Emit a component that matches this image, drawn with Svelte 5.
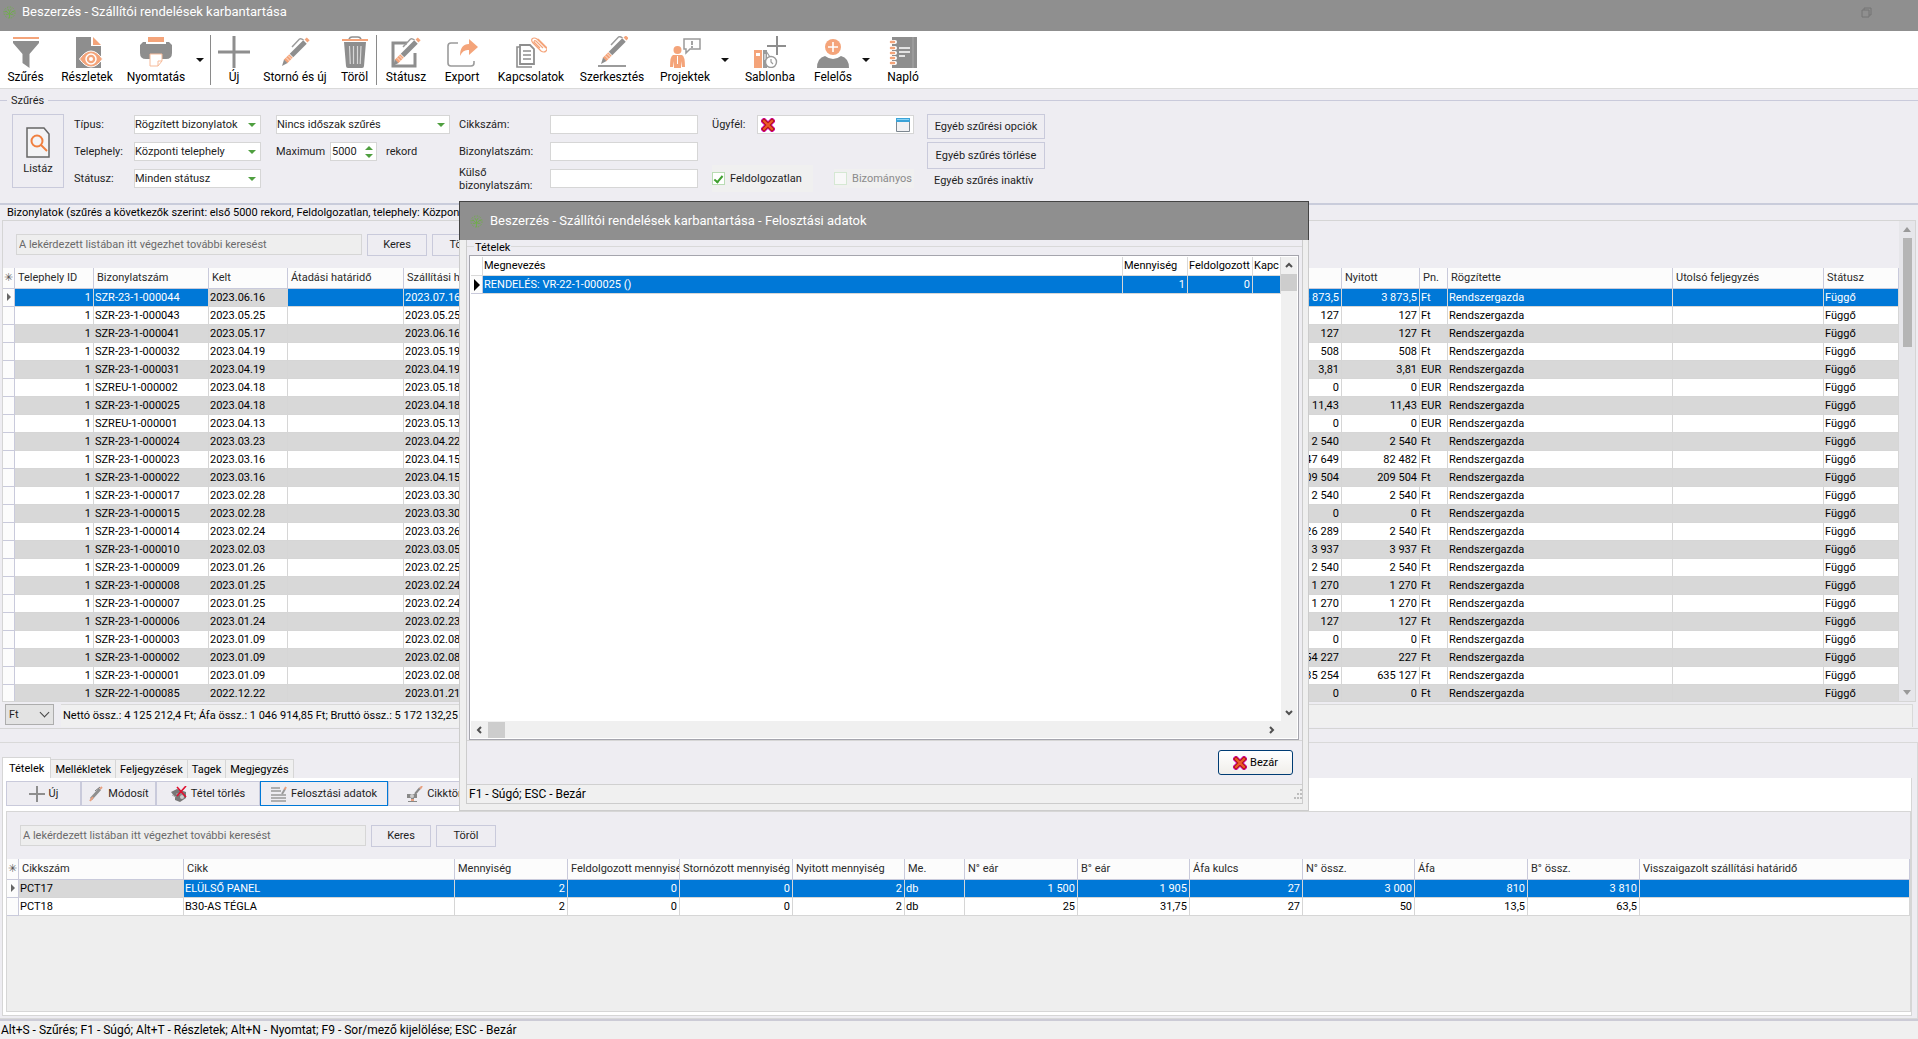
<script>
  const orders = [
    ['SZR-23-1-000044', '2023.06.16', '2023.07.16', '3 873,5', '3 873,5', 'Ft'],
    ['SZR-23-1-000043', '2023.05.25', '2023.05.25', '127', '127', 'Ft'],
    ['SZR-23-1-000041', '2023.05.17', '2023.06.16', '127', '127', 'Ft'],
    ['SZR-23-1-000032', '2023.04.19', '2023.05.19', '508', '508', 'Ft'],
    ['SZR-23-1-000031', '2023.04.19', '2023.04.19', '3,81', '3,81', 'EUR'],
    ['SZREU-1-000002', '2023.04.18', '2023.05.18', '0', '0', 'EUR'],
    ['SZR-23-1-000025', '2023.04.18', '2023.04.18', '11,43', '11,43', 'EUR'],
    ['SZREU-1-000001', '2023.04.13', '2023.05.13', '0', '0', 'EUR'],
    ['SZR-23-1-000024', '2023.03.23', '2023.04.22', '2 540', '2 540', 'Ft'],
    ['SZR-23-1-000023', '2023.03.16', '2023.04.15', '147 649', '82 482', 'Ft'],
    ['SZR-23-1-000022', '2023.03.16', '2023.04.15', '209 504', '209 504', 'Ft'],
    ['SZR-23-1-000017', '2023.02.28', '2023.03.30', '2 540', '2 540', 'Ft'],
    ['SZR-23-1-000015', '2023.02.28', '2023.03.30', '0', '0', 'Ft'],
    ['SZR-23-1-000014', '2023.02.24', '2023.03.26', '26 289', '2 540', 'Ft'],
    ['SZR-23-1-000010', '2023.02.03', '2023.03.05', '3 937', '3 937', 'Ft'],
    ['SZR-23-1-000009', '2023.01.26', '2023.02.25', '2 540', '2 540', 'Ft'],
    ['SZR-23-1-000008', '2023.01.25', '2023.02.24', '1 270', '1 270', 'Ft'],
    ['SZR-23-1-000007', '2023.01.25', '2023.02.24', '1 270', '1 270', 'Ft'],
    ['SZR-23-1-000006', '2023.01.24', '2023.02.23', '127', '127', 'Ft'],
    ['SZR-23-1-000003', '2023.01.09', '2023.02.08', '0', '0', 'Ft'],
    ['SZR-23-1-000002', '2023.01.09', '2023.02.08', '54 227', '227', 'Ft'],
    ['SZR-23-1-000001', '2023.01.09', '2023.02.08', '635 254', '635 127', 'Ft'],
    ['SZR-22-1-000085', '2022.12.22', '2023.01.21', '0', '0', 'Ft']
  ];
  const items = [
    ['PCT17', 'ELÜLSŐ PANEL', '2', '0', '0', '2', 'db', '1 500', '1 905', '27', '3 000', '810', '3 810', ''],
    ['PCT18', 'B30-AS TÉGLA', '2', '0', '0', '2', 'db', '25', '31,75', '27', '50', '13,5', '63,5', '']
  ];
  const itemHeads = ['Cikkszám', 'Cikk', 'Mennyiség', 'Feldolgozott mennyiség', 'Stornózott mennyiség', 'Nyitott mennyiség', 'Me.', 'N° eár', 'B° eár', 'Áfa kulcs', 'N° össz.', 'Áfa', 'B° össz.', 'Visszaigazolt szállítási határidő'];
  const textCols = [0, 1, 6, 13];
  const tools = [
    ['filter', 'Szűrés'], ['details', 'Részletek'], ['print', 'Nyomtatás'], ['arrow', 'Nyomtatás menü'], ['sep', ''],
    ['plus', 'Új'], ['pen', 'Stornó és új'], ['trash', 'Töröl'], ['sep', ''],
    ['status', 'Státusz'], ['export', 'Export'], ['links', 'Kapcsolatok'], ['edit', 'Szerkesztés'],
    ['projects', 'Projektek'], ['arrow', 'Projektek menü'], ['template', 'Sablonba'], ['person', 'Felelős'], ['arrow', 'Felelős menü'], ['log', 'Napló']
  ];
  const tabs = ['Tételek', 'Mellékletek', 'Feljegyzések', 'Tagek', 'Megjegyzés'];
</script>

{#snippet logo()}
  <svg class="logo" viewBox="0 0 14 14" aria-hidden="true">
    <g fill="none" stroke="#6fae4a" stroke-width="1">
      <path d="M7 13V6M7 9 3 5M7 9l4-4M4 6H2M10 6h2M3 9h3M8 9h3M7 6 5 3M7 6l2-3" />
      <circle cx="7" cy="7" r="6" stroke-dasharray="1.6 1.5" />
    </g>
  </svg>
{/snippet}

{#snippet cross()}
  <svg class="cross" viewBox="0 0 14 14" aria-hidden="true">
    <path d="M3 3l8 8M11 3l-8 8" stroke="#d400b8" stroke-width="5.6" stroke-linecap="square" />
    <path d="M3 3l8 8M11 3l-8 8" stroke="#b3200c" stroke-width="4" stroke-linecap="square" />
    <path d="M3 3l8 8M11 3l-8 8" stroke="#ee5a2c" stroke-width="2" stroke-linecap="round" />
  </svg>
{/snippet}

{#snippet penShape()}
  <path d="M13 19 26 6" stroke="#fff" stroke-width="7" />
  <path d="M12.500 19.500 26 6" stroke="#8e8e8e" stroke-width="5" />
  <path d="M13 11l7.500-8q1.500-1 4 1" fill="none" stroke="#9b9b9b" stroke-width="1.500" />
  <path d="M27 5l2.200-2.200" stroke="#f4a47a" stroke-width="4" />
  <path d="M12 20 6.500 25.500" stroke="#f4a47a" stroke-width="5" />
  <path d="M9 19.500l4 4M7 21.500l4 4" stroke="#fff" stroke-width=".7" />
  <path d="M5 23.500 8.500 27 3 30z" fill="#8e8e8e" />
{/snippet}

{#snippet icon(name)}
  <svg class="ico" viewBox="0 0 32 32" aria-hidden="true">
    {#if name === 'filter'}
      <path d="M3 1h26v2H3z" fill="#f4a47a" />
      <path d="M3 5h26v2L19.500 18v14L12.500 27V18L3 7z" fill="#8e8e8e" />
    {:else if name === 'details'}
      <path d="M5 1h15v9h10v22H5z" fill="#8e8e8e" />
      <path d="M22 1l8 8h-8z" fill="#f4a47a" />
      <path d="M8.500 23Q20 7 31.500 23 20 39 8.500 23z" fill="#f4a47a" stroke="#fff" />
      <circle cx="20" cy="23" r="5" fill="none" stroke="#fff" stroke-width="1.500" />
      <circle cx="20" cy="23" r="2" fill="#fff" />
    {:else if name === 'print'}
      <path d="M8 1h16v5H8z" fill="#f4a47a" />
      <path d="M3 6h3v2h20V6h3l3 3v8q0 6-6 6H6q-6 0-6-6V9z" fill="#8e8e8e" />
      <path d="M10 18h12v7l-4 5h-8z" fill="#fff" stroke="#f6bb9a" />
      <path d="M22 25h-4v5" fill="none" stroke="#f6bb9a" />
    {:else if name === 'plus'}
      <path d="M16 0v32M0 16h32" stroke="#8e8e8e" stroke-width="3" />
    {:else if name === 'pen'}
      {@render penShape()}
    {:else if name === 'trash'}
      <path d="M10 3Q11 1 13 1h6q2 0 3 2" fill="none" stroke="#8e8e8e" stroke-width="1.600" />
      <path d="M3 4h26" stroke="#f4a47a" stroke-width="2" />
      <path d="M5 6h22l-2 24q0 2-2 2H9q-2 0-2-2z" fill="#8e8e8e" />
      <path d="M10.500 10l.8 18M14.500 10v18M18.500 10v18M22 10l-.8 18" stroke="#fff" stroke-width="1.200" opacity=".65" />
    {:else if name === 'status'}
      <path d="M17 7H3v23h22V17" fill="none" stroke="#8e8e8e" stroke-width="3" />
      <g>{@render penShape()}</g>
    {:else if name === 'export'}
      <path d="M12 7H5Q2 7 2 10v17q0 3 3 3h20q3 0 3-3v-2" fill="none" stroke="#9b9b9b" stroke-width="1.600" />
      <path d="M14 20q0-12 9-12V3l9 8-9 8v-5q-6-1-9 6z" fill="#f4a47a" />
    {:else if name === 'links'}
      <path d="M5 11H2v20h15" fill="none" stroke="#8e8e8e" stroke-width="1.600" />
      <path d="M5 9h10l4 4v15H5z" fill="#fff" stroke="#8e8e8e" stroke-width="1.800" />
      <path d="M8 15h8M8 19h8M8 23h8" stroke="#8e8e8e" stroke-width="1.500" />
      <path d="M31 12 22 3q-3-2-5 0-1 2 1 4l8 8q3 2 5 0t0-4l-8-8M28 12l-7-7q-2-1-2 1l6 6" fill="none" stroke="#f4a47a" stroke-width="1.200" />
    {:else if name === 'edit'}
      <path d="M2 30h28" stroke="#9b9b9b" stroke-width="2" />
      <g transform="translate(2 -2)">{@render penShape()}</g>
    {:else if name === 'projects'}
      <circle cx="8.500" cy="14" r="4" fill="#f4a47a" />
      <path d="M4 19h9q3 1 3 12h-3l-1-6v7H5v-7l-1 6H1q0-11 3-12z" fill="#f4a47a" />
      <path d="M8.500 20v8" stroke="#fff" />
      <path d="M15 3h16v10H21l-4 4v-4h-2z" fill="#fff" stroke="#9b9b9b" stroke-width="1.500" />
      <path d="M23 5v4M23 10v2" stroke="#8e8e8e" stroke-width="1.600" />
    {:else if name === 'template'}
      <path d="M0 14h8v18H0z" fill="#f4a47a" /><path d="M2 17h4v3H2z" fill="#fff" />
      <path d="M9 14h4v18H9z" fill="#9b9b9b" /><path d="M11 18v6" stroke="#fff" />
      <circle cx="17" cy="26" r="5.500" fill="#fff" stroke="#9b9b9b" stroke-width="1.400" />
      <path d="M17 23v3l2 2M12 15l4 6" fill="none" stroke="#9b9b9b" stroke-width="1.200" />
      <path d="M23 0v19M13 10h19" stroke="#8e8e8e" stroke-width="2" />
    {:else if name === 'person'}
      <circle cx="16" cy="11" r="8" fill="#f4a47a" />
      <path d="M16 6v10M11 11h10" stroke="#fff" stroke-width="1.600" />
      <path d="M0 32q0-10 8-12 8 6 16 0 8 2 8 12z" fill="#8e8e8e" />
    {:else if name === 'log'}
      <path d="M5 1h25v31H5z" fill="#8e8e8e" />
      <path d="M12 12h11M12 16h11M12 20h6" stroke="#fff" stroke-width="1.400" />
      <path d="M26 1v31" stroke="#a8a8a8" />
      <path d="M3 6h5M3 12h5M3 17h5M3 22h5M3 27h5" stroke="#fff" stroke-width="4" stroke-linecap="round" />
      <path d="M4 6h3M4 12h3M4 17h3M4 22h3M4 27h3" stroke="#f4a47a" stroke-width="2.500" stroke-linecap="round" />
    {/if}
  </svg>
{/snippet}

{#snippet search(label)}
  <div class="search">
    <input type="text" aria-label={label} placeholder="A lekérdezett listában itt végezhet további keresést" />
    <button class="btn">Keres</button>
    <button class="btn">Töröl</button>
  </div>
{/snippet}

<div class="page">
  <header class="titlebar">
    {@render logo()}
    <h1>Beszerzés - Szállítói rendelések karbantartása</h1>
    <button class="restore" aria-label="Ablak visszaállítása">
      <svg viewBox="0 0 11 11" aria-hidden="true"><path d="M1 3h7v7H1zM3 3V1h7v7H8" fill="none" stroke="#747474" /></svg>
    </button>
  </header>

  <nav class="toolbar">
    {#each tools as [kind, text]}
      {#if kind === 'sep'}
        <span class="sep"></span>
      {:else if kind === 'arrow'}
        <button class="drop" aria-label={text}></button>
      {:else}
        <button class="tool">{@render icon(kind)}<span>{text}</span></button>
      {/if}
    {/each}
  </nav>

  <fieldset class="filters">
    <legend>Szűrés</legend>
    <button class="btn list">
      <svg viewBox="0 0 24 31" aria-hidden="true">
        <path d="M1 1h17l5 6v23H1z" fill="#f4f4f6" stroke="#666" stroke-width="1.500" />
        <circle cx="11" cy="14" r="5.500" fill="none" stroke="#f08040" stroke-width="2" />
        <path d="M15 18l6 6" stroke="#f08040" stroke-width="2" />
      </svg>
      <span>Listáz</span>
    </button>
    <div class="fields">
      <label for="f-type">Típus:</label>
      <span class="pick"><select id="f-type"><option>Rögzített bizonylatok</option></select></span>
      <span class="pick c4"><select aria-label="Időszak"><option>Nincs időszak szűrés</option></select></span>
      <label class="c6" for="f-item">Cikkszám:</label>
      <input class="box" id="f-item" type="text" />
      <label class="c9" for="f-client">Ügyfél:</label>
      <span class="client">
        <button aria-label="Ügyfél törlése">{@render cross()}</button>
        <input id="f-client" type="text" />
        <button aria-label="Ügyfél választása">
          <svg class="win" viewBox="0 0 14 14" aria-hidden="true"><path d="M.5.500h13v13H.5z" fill="#f2f2f4" stroke="#7d8790" /><path d="M0 0h14v4H0z" fill="#3ba3d8" /><path d="M1 1.500h12" stroke="#8ad4f5" /></svg>
        </button>
      </span>

      <label for="f-site">Telephely:</label>
      <span class="pick"><select id="f-site"><option>Központi telephely</option></select></span>
      <span class="max c4">
        <label for="f-max">Maximum</label>
        <span class="spin"><input id="f-max" type="text" value="5000" /><i class="up"></i><i class="down"></i></span>
        <span>rekord</span>
      </span>
      <label class="c6" for="f-doc">Bizonylatszám:</label>
      <input class="box" id="f-doc" type="text" />

      <label class="c1" for="f-status">Státusz:</label>
      <span class="pick"><select id="f-status"><option>Minden státusz</option></select></span>
      <label class="c6 two" for="f-ext">Külső bizonylatszám:</label>
      <input class="box" id="f-ext" type="text" />
      <span class="checks c9">
        <label><input type="checkbox" checked />Feldolgozatlan</label>
        <label class="off"><input type="checkbox" disabled />Bizományos</label>
      </span>
    </div>
    <div class="extra">
      <button class="btn">Egyéb szűrési opciók</button>
      <button class="btn">Egyéb szűrés törlése</button>
      <span>Egyéb szűrés inaktív</span>
    </div>
  </fieldset>

  <section class="orders">
    <h2>Bizonylatok (szűrés a következők szerint: első 5000 rekord, Feldolgozatlan, telephely: Központi telephely)</h2>
    <div class="orders-body">
      <div class="main">
        {@render search('Keresés a bizonylatokban')}
        <div class="clip">
          <table class="grid">
            <colgroup>
              <col class="w12" /><col class="w79" /><col class="w115" /><col class="w79" /><col class="w116" /><col class="w116" /><col /><col class="w116" /><col class="w78" /><col class="w28" /><col class="w225" /><col class="w151" /><col class="w75" />
            </colgroup>
            <thead>
              <tr>
                <th class="mark">✳</th><th>Telephely ID</th><th>Bizonylatszám</th><th>Kelt</th><th>Átadási határidő</th><th>Szállítási határidő</th><th></th><th></th><th>Nyitott</th><th>Pn.</th><th>Rögzítette</th><th>Utolsó feljegyzés</th><th>Státusz</th>
              </tr>
            </thead>
            <tbody>
              {#each orders as [doc, date, due, total, open, cur], i}
                <tr class:sel={i === 0} class:alt={i % 2 === 0}>
                  <td class="mark">{#if i === 0}<i class="cur"></i>{/if}</td>
                  <td class="num">1</td><td>{doc}</td><td class:plain={i === 0}>{date}</td><td></td><td>{due}</td><td></td>
                  <td class="num">{total}</td><td class="num">{open}</td><td>{cur}</td><td>Rendszergazda</td><td></td><td>Függő</td>
                </tr>
              {/each}
            </tbody>
          </table>
        </div>
      </div>
      <div class="vbar"><i class="up"></i><b></b><i class="down"></i></div>
    </div>
    <footer class="sums">
      <span class="money"><select aria-label="Pénznem"><option>Ft</option></select></span>
      <output>Nettó össz.: 4 125 212,4 Ft; Áfa össz.: 1 046 914,85 Ft; Bruttó össz.: 5 172 132,25 Ft</output>
    </footer>
  </section>

  <section class="details">
    <div class="tabs" role="tablist">
      {#each tabs as tab, i}
        <button role="tab" aria-selected={i === 0} class:on={i === 0}>{tab}</button>
      {/each}
    </div>
    <div class="sheet">
      <div class="acts">
        <button class="btn"><svg viewBox="0 0 16 16" aria-hidden="true"><path d="M8 0v16M0 8h16" stroke="#8e8e8e" stroke-width="2" /></svg>Új</button>
        <button class="btn"><svg viewBox="0 0 16 16" aria-hidden="true"><path d="M3 13 12 3" stroke="#8e8e8e" stroke-width="3" /><path d="M7 5l5-4" stroke="#777" /><path d="M2 15l3-4" stroke="#e7a080" stroke-width="2" /><path d="M12 3l2-2" stroke="#e7a080" stroke-width="2" /></svg>Módosít</button>
        <button class="btn"><svg viewBox="0 0 16 16" aria-hidden="true"><path d="M0 6 6 3l9 3v6l-6 4-5-2v-3z" fill="#777" /><path d="M1 9l4 2M5 8h8" stroke="#aaa" /><circle cx="11" cy="11" r="2" fill="#ccc" /><path d="M6 1l9 10M15 0 6 10" stroke="#e01030" stroke-width="1.600" /></svg>Tétel törlés</button>
        <button class="btn focus"><svg viewBox="0 0 16 16" aria-hidden="true"><path d="M0 2h9M0 5h10M0 9h15M0 12h15M0 15h15" stroke="#999" stroke-width="1.500" /><path d="M11 8l3-5" stroke="#999" stroke-width="2" /><path d="M13.500 3.500 15 1" stroke="#e7a080" stroke-width="2" /></svg>Felosztási adatok</button>
        <button class="btn"><svg viewBox="0 0 16 16" aria-hidden="true"><path d="M0 8h10v4H7v3h3v1H1v-1h3v-3H0z" fill="#888" /><circle cx="5" cy="10" r="2" fill="#ccc" /><path d="M8 8l5-6" stroke="#888" stroke-width="2" /><path d="M13 3l2-3" stroke="#e7a080" stroke-width="2" /><path d="M4 14h3" stroke="#e7a080" stroke-width="2" /></svg>Cikktörzs</button>
      </div>
      <div class="inner">
        {@render search('Keresés a tételekben')}
        <div class="blank">
          <table class="grid">
            <colgroup>
              <col class="w12" /><col class="w165" /><col class="w271" /><col class="w113" /><col class="w112" /><col class="w113" /><col class="w112" /><col class="w60" /><col class="w113" /><col class="w112" /><col class="w113" /><col class="w112" /><col class="w113" /><col class="w112" /><col />
            </colgroup>
            <thead>
              <tr><th class="mark">✳</th>{#each itemHeads as head}<th>{head}</th>{/each}</tr>
            </thead>
            <tbody>
              {#each items as row, i}
                <tr class:sel={i === 0}>
                  <td class="mark">{#if i === 0}<i class="cur"></i>{/if}</td>
                  {#each row as cell, c}
                    <td class:num={!textCols.includes(c)} class:plain={i === 0 && c === 0}>{cell}</td>
                  {/each}
                </tr>
              {/each}
            </tbody>
          </table>
        </div>
      </div>
    </div>
  </section>

  <footer class="status">Alt+S - Szűrés; F1 - Súgó; Alt+T - Részletek; Alt+N - Nyomtat; F9 - Sor/mező kijelölése; ESC - Bezár</footer>

  <div class="modal" role="dialog" aria-labelledby="modal-title">
    <header>{@render logo()}<h2 id="modal-title">Beszerzés - Szállítói rendelések karbantartása - Felosztási adatok</h2></header>
    <div class="frame">
      <fieldset>
        <legend>Tételek</legend>
        <div class="list-box">
          <div class="list-main">
            <table class="grid thin">
              <colgroup><col class="w12" /><col /><col class="w65" /><col class="w65" /><col class="w28" /></colgroup>
              <thead><tr><th></th><th>Megnevezés</th><th>Mennyiség</th><th>Feldolgozott</th><th>Kapc</th></tr></thead>
              <tbody>
                <tr class="sel"><td class="mark"><i class="cur"></i></td><td>RENDELÉS: VR-22-1-000025 ()</td><td class="num">1</td><td class="num">0</td><td></td></tr>
              </tbody>
            </table>
          </div>
          <div class="sv">
            <svg viewBox="0 0 16 16" aria-hidden="true"><path d="M5 10l3-3 3 3" /></svg><b></b>
            <svg viewBox="0 0 16 16" aria-hidden="true"><path d="M5 6l3 3 3-3" /></svg>
          </div>
          <div class="sh">
            <svg viewBox="0 0 16 16" aria-hidden="true"><path d="M10 5 7 8l3 3" /></svg><b></b>
            <svg viewBox="0 0 16 16" aria-hidden="true"><path d="M6 5l3 3-3 3" /></svg>
          </div>
        </div>
      </fieldset>
      <div class="close"><button>{@render cross()}Bezár</button></div>
      <footer>
        <span>F1 - Súgó; ESC - Bezár</span>
        <svg viewBox="0 0 8 12" aria-hidden="true"><path d="M6 1h2v2H6zM6 5h2v2H6zM3 5h2v2H3zM6 9h2v2H6zM3 9h2v2H3zM0 9h2v2H0z" fill="#bdbdbd" /></svg>
      </footer>
    </div>
  </div>
</div>

<style>
  :global(body) { margin: 0; background: #eeedf2; }
  .page {
    --ui: Roboto, "Noto Sans", sans-serif;
    position: relative; display: flex; flex-direction: column; min-height: 100vh;
    font: 11px/14px var(--ui); color: #1e1e1e; background: #eeedf2; overflow: hidden;
  }
  .page * { box-sizing: border-box; }
  button, input, select { font: inherit; color: inherit; margin: 0; padding: 0; border: 0; background: none; border-radius: 0; }
  h1, h2 { margin: 0; font-weight: 400; }
  fieldset { margin: 0; padding: 0; border: 0; min-width: 0; }

  .titlebar { display: flex; align-items: center; height: 31px; padding: 0 46px 7px 3px; background: #8f8f8f; color: #fff; }
  .logo { width: 13px; height: 13px; flex: none; }
  .titlebar h1 { flex: 1; margin-left: 6px; font: 13px/18px var(--ui); }
  .restore svg { display: block; width: 11px; height: 11px; }

  .toolbar {
    display: grid; height: 58px; background: #fff; border-bottom: 1px solid #dadada; align-items: start;
    grid-template-columns: 51px 72px 66px 21px 1px 46px 76px 43px 2px 56px 56px 82px 80px 66px 14px 76px 50px 16px 58px;
  }
  .tool { display: flex; flex-direction: column; align-items: center; padding-top: 5px; font: 12px/19px var(--ui); color: #000; white-space: nowrap; }
  .ico { width: 32px; height: 32px; }
  .sep { width: 1px; height: 50px; margin-top: 4px; background: #8a8a8a; }
  .drop { height: 58px; display: grid; place-items: center; }
  .drop::before { content: ""; border: 4px solid transparent; border-top-color: #111; border-bottom: 0; }

  .btn { border: 1px solid #c9cadb; background: #eeedf2; text-align: center; white-space: nowrap; }
  .filters { position: relative; display: flex; height: 116px; padding: 22px 12px 0; border-bottom: 2px solid #c9ccdb; align-items: start; }
  .filters::before { content: ""; position: absolute; left: 0; right: 0; top: 11px; height: 1px; background: #c9cadb; }
  .filters legend { position: absolute; left: 7px; top: 5px; padding: 0 4px; background: #eeedf2; }
  .list { display: flex; flex-direction: column; align-items: center; width: 52px; height: 74px; margin-top: 3px; padding-top: 12px; gap: 4px; }
  .list svg { width: 24px; height: 31px; }
  .fields {
    display: grid; margin-left: 10px; grid-template-rows: 27px 27px 27px; align-items: center;
    grid-template-columns: 60px 127px 15px 174px 9px 91px 148px 14px 45px 157px;
  }
  .c1 { grid-column: 1; }
  .c4 { grid-column: 4; }
  .c6 { grid-column: 6; }
  .c9 { grid-column: 9; }
  .checks.c9 { grid-column: 9 / 11; }
  .two { line-height: 13px; }
  .pick { position: relative; display: block; height: 19px; background: #fff; border: 1px solid #d6d6d6; }
  .pick select { display: block; width: 100%; height: 100%; appearance: none; }
  .pick::after { content: ""; position: absolute; right: 4px; top: 7px; border: 4px solid transparent; border-top-color: #4f9f3f; border-bottom: 0; pointer-events: none; }
  .box { height: 19px; background: #fff; border: 1px solid #d6d6d6; }
  .client { display: flex; align-items: center; height: 19px; padding: 0 3px; background: #fff; border: 1px solid #d6d6d6; }
  .client input { flex: 1; min-width: 0; }
  .cross, .win { display: block; width: 14px; height: 14px; }
  .max { display: flex; align-items: center; }
  .max label { width: 54px; }
  .spin { display: grid; grid-template: 8px 8px / 1fr 14px; align-content: center; align-items: center; justify-items: center; width: 47px; height: 19px; margin-right: 9px; background: #fff; border: 1px solid #d6d6d6; }
  .spin input { grid-row: 1 / 3; width: 100%; padding-left: 1px; }
  .up, .down { border: 4px solid transparent; }
  .up { border-bottom-color: #4f9f3f; border-top: 0; }
  .down { border-top-color: #4f9f3f; border-bottom: 0; grid-column: 2; }
  .checks { display: flex; align-items: center; justify-content: space-between; }
  .checks label { display: flex; align-items: center; gap: 5px; height: 27px; padding: 0 11px 0 0; background: #f0f0f0; }
  .checks .off { height: 19px; padding: 0 2px 0 0; color: #8b8b8b; }
  .checks input { appearance: none; display: grid; place-items: center; width: 13px; height: 13px; background: #fff; border: 1px solid #b9dcb4; }
  .checks .off input { background: #f8f8f8; border-color: #d5e8d3; }
  .checks input:checked::before { content: ""; width: 3px; height: 7px; border: solid #3f9f2f; border-width: 0 2px 2px 0; rotate: 40deg; }
  .extra { display: flex; flex-direction: column; gap: 3px; width: 118px; margin: 3px 0 0 13px; }
  .extra .btn { height: 25px; }
  .extra .btn + .btn { height: 27px; }
  .extra span { padding: 2px 7px; }

  .orders { height: 524px; display: flex; flex-direction: column; border-bottom: 1px solid #d5d5d5; }
  .orders h2 { padding: 0 7px; font: 11px/15px var(--ui); height: 15px; color: #000; white-space: nowrap; }
  .orders-body { display: flex; height: 482px; margin: 0 2px; border: 1px solid #d5d5d5; }
  .main { flex: 1; min-width: 0; }
  .search { display: grid; grid-template-columns: 346px 60px 60px; column-gap: 5px; padding: 13px; height: 47px; }
  .search input { height: 21px; padding: 0 2px; background: #eee; border: 1px solid #d6d6d6; }
  .search input::placeholder { color: #6a6a6a; opacity: 1; }
  .search .btn { height: 22px; }
  .clip { height: 433px; overflow: hidden; }
  .grid { width: 100%; table-layout: fixed; border-collapse: separate; border-spacing: 0; background: #fff; color: #000; }
  .grid th { height: 21px; padding: 0 3px; font-weight: 400; text-align: left; color: #2a2a2a; background: #fcfcfc; border: solid #c9cadb; border-width: 0 1px 1px 0; overflow: hidden; white-space: nowrap; }
  .grid td { height: 18px; padding: 0 2px 0 1px; border: solid #d6d6d6; border-width: 0 1px 1px 0; overflow: hidden; white-space: nowrap; line-height: 17px; }
  .grid .num { text-align: right; }
  .grid .alt td { background: #d8d8d8; }
  .grid .sel td { background: #0078d7; color: #fff; }
  .grid .sel .plain { background: #d8d8d8; color: #000; }
  .grid .mark, .grid .sel .mark, .grid .alt .mark { padding: 0; text-align: center; background: #fcfcfc; color: #555; border-color: #c9cadb; }
  .cur { display: inline-block; border: 4px solid transparent; border-left-color: #666; border-right: 0; }
  .w12 { width: 12px; } .w28 { width: 28px; } .w60 { width: 60px; } .w65 { width: 65px; } .w75 { width: 75px; } .w78 { width: 78px; }
  .w79 { width: 79px; } .w112 { width: 112px; } .w113 { width: 113px; } .w115 { width: 115px; } .w116 { width: 116px; }
  .w151 { width: 151px; } .w165 { width: 165px; } .w225 { width: 225px; } .w271 { width: 271px; }
  .vbar { display: flex; flex-direction: column; align-items: center; width: 16px; padding: 6px 0; background: #e6e6ea; }
  .vbar .up { border-bottom-color: #999; border-bottom-width: 5px; }
  .vbar .down { border-top-color: #999; border-top-width: 5px; margin-top: auto; }
  .vbar b { width: 9px; height: 109px; margin-top: 6px; background: #b5b5b5; }
  .sums { display: flex; gap: 7px; padding: 2px 5px; flex: 1; }
  .money { position: relative; width: 49px; height: 21px; background: #e3e3e3; border: 1px solid #adadad; }
  .money select { width: 100%; height: 100%; padding-left: 3px; appearance: none; }
  .money::after { content: ""; position: absolute; right: 5px; top: 4px; width: 6px; height: 6px; border: solid #444; border-width: 0 1px 1px 0; rotate: 45deg; pointer-events: none; }
  output { flex: 1; padding: 2px; border-top: 1px solid #d9d9d9; border-right: 1px solid #d9d9d9; background: #f0f0f0; font: 11px/18px var(--ui); color: #000; white-space: nowrap; overflow: hidden; }

  .details { flex: 1; display: flex; flex-direction: column; margin-top: 13px; padding: 14px 5px 2px 2px; border: 1px solid #d9d9d9; border-left: 0; }
  .tabs { display: flex; align-items: flex-end; height: 21px; }
  .tabs button { height: 19px; padding: 0 4px; border: 1px solid #d6d6d6; border-width: 1px 1px 0 0; background: #f0f0f0; font: 11px/17px var(--ui); color: #000; }
  .tabs .on { height: 21px; padding: 0 6px; background: #fff; border-left-width: 1px; }
  .sheet { flex: 1; display: flex; flex-direction: column; padding: 3px 0 3px 3px; background: #fff; border: 1px solid #d6d6d6; border-top: 0; }
  .acts { display: grid; grid-template-columns: 75px 75px 104px 128px 104px; height: 25px; }
  .acts .btn { display: flex; align-items: center; justify-content: center; gap: 4px; }
  .acts svg { width: 16px; height: 16px; }
  .acts .focus { border-color: #0078d7; }
  .inner { flex: 1; display: flex; flex-direction: column; margin-top: 5px; border: 1px solid #d6d6d6; background: #eeedf2; }
  .blank { flex: 1; background: #eee; }
  .status { height: 20px; padding: 0 1px; border-top: 2px solid #cccbd6; background: #f0f0f0; font: 12px/18px var(--ui); color: #000; }

  .modal { position: absolute; left: 459px; top: 201px; width: 850px; height: 610px; display: flex; flex-direction: column; background: #efefef; border: 1px solid #ccc; color: #000; }
  .modal > header { display: flex; align-items: center; height: 40px; margin: -1px -1px 0; padding: 0 10px; gap: 7px; background: #8f8f8f; border: solid #444; border-width: 1px 1px 0; color: #fff; }
  .modal h2 { font: 13px/18px var(--ui); }
  .frame { flex: 1; display: flex; flex-direction: column; margin: 0 5px 6px 6px; background: #eeedf2; border: 1px solid #ccc; border-top: 0; }
  .frame fieldset { position: relative; height: 501px; padding: 15px 3px 0 2px; border-bottom: 1px solid #d6d6d6; }
  .frame fieldset::before { content: ""; position: absolute; left: 0; right: 0; top: 6px; height: 1px; background: #d9d9d9; }
  .frame legend { position: absolute; left: 7px; top: 1px; padding: 0 1px; background: #eeedf2; }
  .list-box { display: grid; grid-template: 1fr 17px / 1fr 16px; height: 485px; padding: 1px; background: #fff; border: 1px solid #a5a5ad; }
  .thin th { height: 19px; padding: 0 1px; background: #fff; color: #000; border-color: #d9d9d9; }
  .thin .cur { border-width: 6px; border-left-color: #000; border-right: 0; display: block; margin-left: 3px; }
  .sv, .sh { display: flex; align-items: center; background: #f0f0f0; }
  .sv { flex-direction: column; }
  .sh { grid-column: 1 / 3; padding-right: 17px; }
  .sv svg, .sh svg { width: 16px; height: 16px; fill: none; stroke: #505050; stroke-width: 2; }
  .sv svg:last-child { margin-top: auto; }
  .sh svg:last-child { margin-left: auto; }
  .sv b { width: 16px; height: 17px; margin-top: 1px; background: #cdcdcd; }
  .sh b { width: 17px; height: 16px; margin-left: 1px; background: #cdcdcd; }
  .close { display: flex; flex: 1; justify-content: flex-end; align-items: flex-start; padding: 9px; }
  .close button { display: flex; align-items: center; justify-content: center; gap: 3px; width: 75px; height: 25px; border: 1px solid #003c74; border-radius: 3px; background: linear-gradient(#fff, #f0eeea); }
  .frame footer { display: flex; justify-content: space-between; align-items: center; height: 19px; padding-left: 2px; border-top: 1px solid #d0d0d0; background: #f0f0f0; font: 12px/17px var(--ui); }
  .frame footer svg { width: 8px; height: 12px; }
</style>
